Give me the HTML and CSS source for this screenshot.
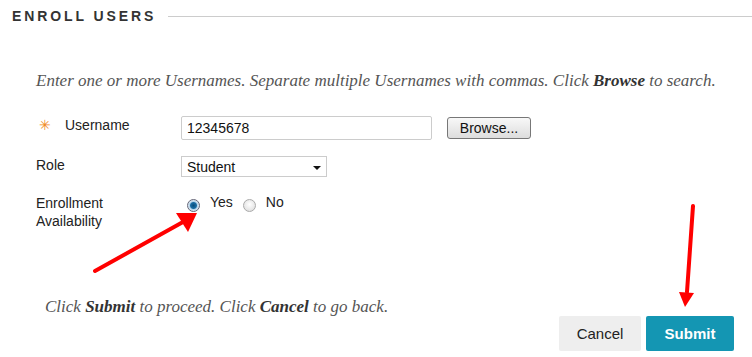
FILE: index.html
```html
<!DOCTYPE html>
<html lang="en">
<head>
    <meta charset="UTF-8">
    <title>Enroll Users</title>
    <link rel="stylesheet" href="styles.css">
</head>
<body>
    <div class="page">
        <div class="step-title">
            <h2>Enroll Users</h2>
            <span class="rule"></span>
        </div>

        <p class="instructions">Enter one or more Usernames. Separate multiple Usernames with commas. Click <strong>Browse</strong> to search.</p>

        <div class="form">
            <div class="row row-user">
                <label class="field-label" for="userName"><span class="req">&#10035;</span>Username</label>
                <div class="field">
                    <input type="text" id="userName" class="text-input" value="12345678">
                    <button class="browse-btn">Browse...</button>
                </div>
            </div>
            <div class="row row-role">
                <label class="field-label" for="role">Role</label>
                <div class="field">
                    <div class="select-box" id="role">
                        <span>Student</span>
                        <span class="caret"></span>
                    </div>
                </div>
            </div>
            <div class="row row-avail">
                <label class="field-label">Enrollment<br>Availability</label>
                <div class="field radios">
                    <span class="radio checked"></span><span class="radio-text">Yes</span>
                    <span class="radio"></span><span class="radio-text">No</span>
                </div>
            </div>
        </div>

        <div class="submit-bar">
            <p class="hint">Click <strong>Submit</strong> to proceed. Click <strong>Cancel</strong> to go back.</p>
            <div class="actions">
                <button class="btn btn-cancel">Cancel</button>
                <button class="btn btn-submit">Submit</button>
            </div>
        </div>

        <!-- annotation arrows drawn over the screenshot -->
        <svg class="arrows" width="752" height="357" viewBox="0 0 752 357">
            <line x1="95" y1="271" x2="183" y2="222" stroke="#f00" stroke-width="4" stroke-linecap="round"/>
            <polygon points="197,213 176,213 188,232" fill="#f00"/>
            <line x1="693" y1="206" x2="687" y2="292" stroke="#f00" stroke-width="4" stroke-linecap="round"/>
            <polygon points="679,292 694,293 685,307" fill="#f00"/>
        </svg>
    </div>
</body>
</html>
```

FILE: styles.css
```css
body {
    margin: 0;
    background: #fff;
    font-family: "Liberation Sans", Arial, sans-serif;
    color: #222;
}
.page {
    position: relative;
    width: 752px;
    height: 357px;
    overflow: hidden;
}
.step-title {
    display: flex;
    align-items: center;
    padding: 8px 0 0 12px;
}
.step-title h2 {
    margin: 0;
    font-size: 14px;
    font-weight: bold;
    letter-spacing: 2.9px;
    text-transform: uppercase;
    color: #333;
}
.step-title .rule {
    flex: 1;
    height: 1px;
    margin-left: 12px;
    background: #ccc;
}
.instructions {
    margin: 47px 0 0 36px;
    font-family: "Liberation Serif", "Times New Roman", serif;
    font-style: italic;
    font-size: 17px;
    color: #555;
}
.instructions strong,
.hint strong {
    color: #333;
}
.form {
    margin-top: 25px;
}
.row {
    display: grid;
    grid-template-columns: 145px 1fr;
    padding-left: 36px;
}
.field-label {
    font-size: 14px;
    line-height: 18px;
    color: #222;
}
.req {
    color: #f08a24;
    font-size: 14px;
    margin: 0 14px 0 3px;
}
.field {
    display: flex;
    align-items: center;
}
.text-input {
    width: 251px;
    height: 24px;
    box-sizing: border-box;
    border: 1px solid #ccc;
    border-radius: 2px;
    padding: 2px 5px;
    font-family: "Liberation Sans", Arial, sans-serif;
    font-size: 14px;
    color: #111;
}
.browse-btn {
    margin-left: 15px;
    width: 84px;
    height: 22px;
    border: 1px solid #777;
    border-radius: 3px;
    background: linear-gradient(#f8f8f8, #ddd);
    font-family: "Liberation Sans", Arial, sans-serif;
    font-size: 14px;
    color: #111;
    padding: 0;
}
.row-role {
    margin-top: 16px;
}
.select-box {
    width: 146px;
    height: 21px;
    box-sizing: border-box;
    border: 1px solid #ccc;
    display: flex;
    align-items: center;
    justify-content: space-between;
    padding: 0 5px;
    font-size: 14px;
    color: #111;
}
.caret {
    width: 0;
    height: 0;
    border-left: 4px solid transparent;
    border-right: 4px solid transparent;
    border-top: 4px solid #111;
    margin-top: 2px;
}
.row-avail {
    margin-top: 17px;
}
.radios {
    align-items: flex-start;
}
.radio {
    width: 13px;
    height: 13px;
    box-sizing: border-box;
    border-radius: 50%;
    border: 1px solid #aaa;
    background: radial-gradient(circle at 50% 40%, #fff, #d8d8d8);
    margin: 5px 10px 0 6px;
}
.radio.checked {
    border-color: #667;
    background: radial-gradient(circle, #0a4d7a 0, #1b6ea5 3px, #b7d3e8 4px, #e6f0f7 6px);
}
.radio-text {
    font-size: 14px;
    margin-right: 4px;
}
.submit-bar {
    display: flex;
    justify-content: space-between;
    align-items: flex-start;
    padding: 0 18px 0 45px;
    margin-top: 61px;
}
.hint {
    margin: 6px 0 0;
    font-family: "Liberation Serif", "Times New Roman", serif;
    font-style: italic;
    font-size: 17px;
    color: #555;
}
.actions {
    display: flex;
    gap: 5px;
    margin-top: 25px;
}
.btn {
    height: 35px;
    border: none;
    border-radius: 2px;
    font-family: "Liberation Sans", Arial, sans-serif;
    font-size: 15px;
    padding: 0;
}
.btn-cancel {
    width: 82px;
    background: #eee;
    color: #222;
}
.btn-submit {
    width: 88px;
    background: #1496b3;
    color: #fff;
    font-weight: bold;
}
.arrows {
    position: absolute;
    left: 0;
    top: 0;
    pointer-events: none;
}
```
